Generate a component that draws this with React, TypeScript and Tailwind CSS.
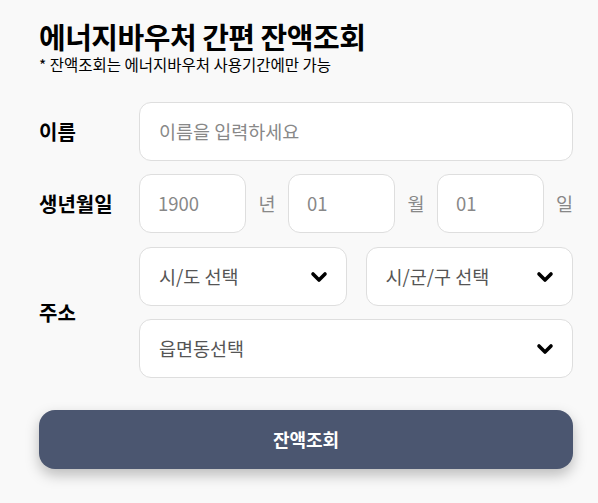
import { ChevronDown } from "lucide-react";

const font = {
  fontFamily: '"Noto Sans CJK KR", "Noto Sans", sans-serif',
};

const Select = ({ label, className }: { label: string; className?: string }) => (
  <div
    className={`h-[59px] flex items-center justify-between pl-[19px] pr-[15px] bg-white border border-[#dedede] rounded-[12px] ${className ?? ""}`}
  >
    <span className="text-[18.5px] text-[#555]">{label}</span>
    <ChevronDown className="w-[24px] h-[24px] text-black" strokeWidth={3.6} />
  </div>
);

const DateBox = ({ value }: { value: string }) => (
  <div className="w-[107px] h-[59px] flex items-center pl-[18px] bg-white border border-[#dedede] rounded-[12px]">
    <span className="text-[18.5px] text-[#888]">{value}</span>
  </div>
);

export default function App() {
  return (
    <div className="min-h-[503px] w-[598px] bg-[#f9f9f9] pl-[39px] pr-[25px] pt-[18px]" style={font}>
      <h1 className="text-[29px] font-bold leading-[36px] text-black tracking-[-0.5px]">
        에너지바우처 간편 잔액조회
      </h1>
      <p className="mt-[2px] text-[15.5px] leading-[17px] text-black">
        * 잔액조회는 에너지바우처 사용기간에만 가능
      </p>

      <div className="mt-[29px] flex items-center">
        <span className="w-[100px] text-[20px] font-bold text-black">이름</span>
        <div className="flex-1 h-[59px] flex items-center pl-[19px] bg-white border border-[#dedede] rounded-[12px]">
          <span className="text-[18.5px] text-[#888]">이름을 입력하세요</span>
        </div>
      </div>

      <div className="mt-[13px] flex items-center">
        <span className="w-[100px] text-[20px] font-bold text-black">생년월일</span>
        <DateBox value="1900" />
        <span className="w-[42px] text-center text-[18.5px] text-[#888]">년</span>
        <DateBox value="01" />
        <span className="w-[42px] text-center text-[18.5px] text-[#888]">월</span>
        <DateBox value="01" />
        <span className="flex-1 text-right text-[18.5px] text-[#888]">일</span>
      </div>

      <div className="mt-[14px] flex items-center">
        <span className="w-[100px] text-[20px] font-bold text-black">주소</span>
        <div className="flex-1 flex flex-col gap-[13px]">
          <div className="flex gap-[19px]">
            <Select label="시/도 선택" className="flex-1" />
            <Select label="시/군/구 선택" className="flex-1" />
          </div>
          <Select label="읍면동선택" />
        </div>
      </div>

      <button className="mt-[32px] w-full h-[59px] rounded-[16px] bg-[#4b5670] text-white text-[18px] font-bold shadow-[0_6px_14px_rgba(0,0,0,0.25)]">
        잔액조회
      </button>
    </div>
  );
}
